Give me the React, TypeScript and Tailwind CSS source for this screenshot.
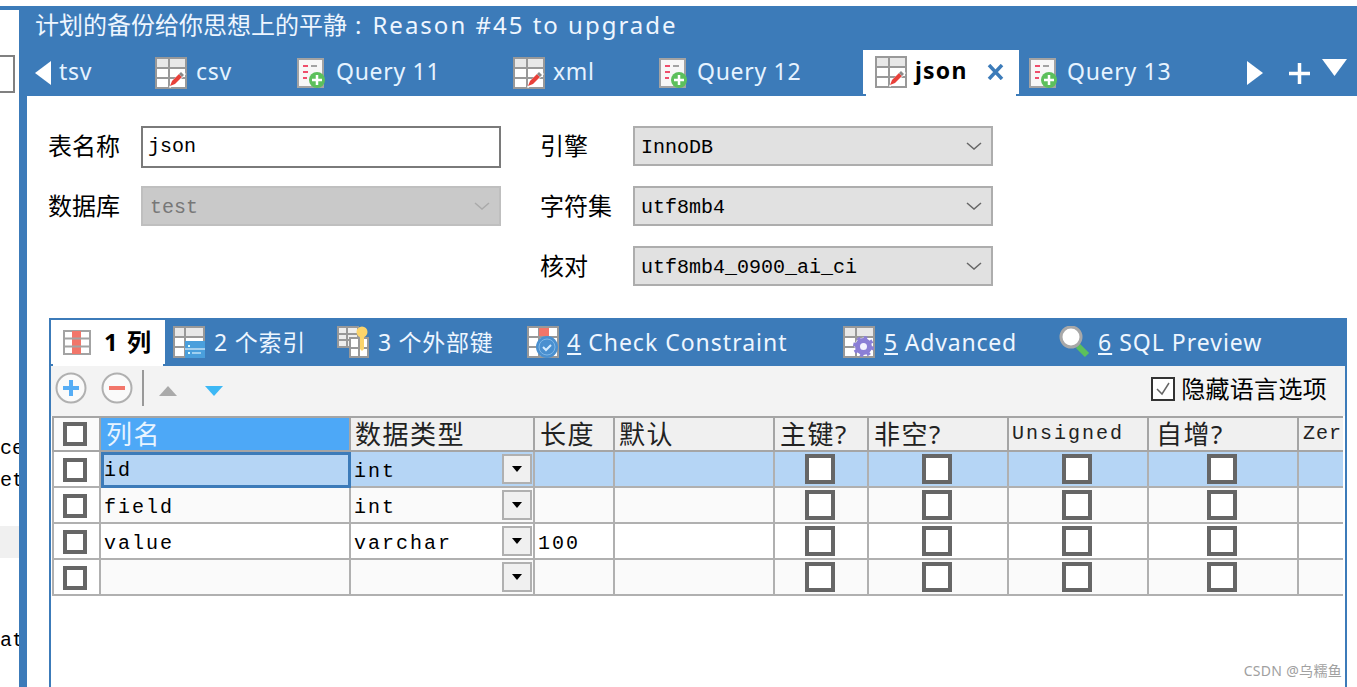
const sans = "font-['Noto_Sans','Noto_Sans_CJK_SC',sans-serif]";
const mono = "font-['Liberation_Mono','Noto_Sans_CJK_SC',monospace]";

function TableEditIcon() {
  return (
    <svg width="32" height="32" viewBox="0 0 32 32" className="shrink-0">
      <rect x="1" y="1" width="30" height="30" fill="#fff" stroke="#999" strokeWidth="2" />
      <rect x="2" y="2" width="28" height="8" fill="#e8e8e8" />
      <path d="M1 11h30M1 21h30M14 1v30" stroke="#999" strokeWidth="2" fill="none" />
      <path d="M14 30l4-7 9-9 4 3-9 9-7 5z" fill="#fff" />
      <path d="M15 29l2-5 7-7 3 3-7 7z" fill="#e8413a" />
      <path d="M24 17l2-2 3 3-2 2z" fill="#8a8a8a" />
    </svg>
  );
}

function QueryIcon() {
  return (
    <svg width="28" height="30" viewBox="0 0 28 30" className="shrink-0">
      <rect x="1" y="1" width="25" height="28" fill="#f7f7f7" stroke="#a3a3a3" strokeWidth="2" />
      <path d="M6 8h5M6 14h5M6 20h4" stroke="#ef4f6c" strokeWidth="2" />
      <path d="M14 8h6" stroke="#a3a3a3" strokeWidth="2" />
      <circle cx="20" cy="22" r="8" fill="#5cc05c" />
      <path d="M20 17v10M15 22h10" stroke="#fff" strokeWidth="2.5" />
    </svg>
  );
}

function ColumnsIcon() {
  return (
    <svg width="28" height="25" viewBox="0 0 28 25" className="shrink-0">
      <rect x="1" y="1" width="26" height="23" fill="#fff" stroke="#a3a3a3" strokeWidth="2" />
      <rect x="9" y="1" width="9" height="23" fill="#f2766a" />
      <path d="M1 8.5h26M1 16.5h26" stroke="#a3a3a3" strokeWidth="2" />
    </svg>
  );
}

function IndexIcon() {
  return (
    <svg width="32" height="32" viewBox="0 0 32 32" className="shrink-0">
      <rect x="1" y="1" width="30" height="30" fill="#fff" stroke="#999" strokeWidth="2" />
      <rect x="2" y="2" width="28" height="8" fill="#e8e8e8" />
      <path d="M1 11h30M1 21h30M12 1v30" stroke="#999" strokeWidth="2" fill="none" />
      <rect x="12" y="15" width="20" height="17" fill="#4a9fdc" />
      <path d="M15 20h2M15 27h2" stroke="#dff" strokeWidth="2" />
      <path d="M19 27h9" stroke="#9fd0f0" strokeWidth="2" />
      <path d="M12 23h20" stroke="#fff" strokeWidth="1" />
    </svg>
  );
}

function ForeignKeyIcon() {
  return (
    <svg width="32" height="32" viewBox="0 0 32 32" className="shrink-0">
      <rect x="1" y="1" width="20" height="20" fill="#eee" stroke="#999" strokeWidth="2" />
      <path d="M1 8h20M1 14h20M10 1v20" stroke="#999" strokeWidth="2" />
      <rect x="13" y="12" width="18" height="19" fill="#fff" stroke="#999" strokeWidth="2" />
      <path d="M13 22h18M22 12v19" stroke="#999" strokeWidth="2" />
      <circle cx="25" cy="6" r="5.5" fill="#fbd46a" />
      <path d="M23 9h4v14l-2 2-2-2z" fill="#fbd46a" />
    </svg>
  );
}

function CheckIcon() {
  return (
    <svg width="33" height="32" viewBox="0 0 33 32" className="shrink-0">
      <rect x="1" y="1" width="30" height="30" fill="#fff" stroke="#999" strokeWidth="2" />
      <path d="M1 11h30M1 21h30M12 1v30" stroke="#999" strokeWidth="2" />
      <rect x="12" y="2" width="10" height="8" fill="#f2766a" />
      <circle cx="20" cy="21" r="11" fill="#4a90d0" />
      <circle cx="20" cy="21" r="8" fill="none" stroke="#7fb6e6" strokeWidth="1" />
      <path d="M16 21l3 3 5-5" stroke="#d5ecff" strokeWidth="2" fill="none" />
    </svg>
  );
}

function AdvancedIcon() {
  return (
    <svg width="32" height="32" viewBox="0 0 32 32" className="shrink-0">
      <rect x="1" y="1" width="30" height="30" fill="#fff" stroke="#999" strokeWidth="2" />
      <rect x="2" y="2" width="28" height="8" fill="#e8e8e8" />
      <path d="M1 11h30M1 21h30M13 1v30" stroke="#999" strokeWidth="2" />
      <circle cx="20.5" cy="20.5" r="9" fill="#fff" />
      <circle cx="20.5" cy="20.5" r="6" fill="#f4f2ff" stroke="#8b7fd6" strokeWidth="5" />
      <circle cx="20.5" cy="20.5" r="9" fill="none" stroke="#8b7fd6" strokeWidth="3" strokeDasharray="3.5 3.57" />
    </svg>
  );
}

function SearchIcon() {
  return (
    <svg width="32" height="32" viewBox="0 0 32 32" className="shrink-0">
      <path d="M19 20l9 9" stroke="#5cc05c" strokeWidth="6" />
      <circle cx="12" cy="11" r="10" fill="#fff" stroke="#a8a8a8" strokeWidth="3" />
    </svg>
  );
}

function TabText({ children, className }: { children: React.ReactNode; className?: string }) {
  return <span className={`${sans} text-[23px] leading-none whitespace-nowrap ${className ?? ""}`}>{children}</span>;
}

function Chevron({ color = "#666" }: { color?: string }) {
  return (
    <svg width="16" height="8" viewBox="0 0 16 8" className="shrink-0">
      <path d="M1 1l7 6 7-6" fill="none" stroke={color} strokeWidth="1.5" />
    </svg>
  );
}

function Field({ value, disabled }: { value: string; disabled?: boolean }) {
  return (
    <div
      className={`flex h-10 w-[360px] items-center justify-between border-2 pr-[9px] text-[20px] ${mono} ${
        disabled ? "border-[#bfbfbf] bg-[#c9c9c9] pl-[7px] text-[#777]" : "border-[#adadad] bg-[#e1e1e1] pl-[6px] text-black"
      }`}
    >
      <span className="mt-[3px]">{value}</span>
      <Chevron color={disabled ? "#aaa" : "#666"} />
    </div>
  );
}

function Label({ children }: { children: React.ReactNode }) {
  return <div className={`${sans} w-[93px] text-[24px] leading-10 text-black`}>{children}</div>;
}

function Box({ small }: { small?: boolean }) {
  return <div className={small ? "h-6 w-6 border-4 border-[#666] bg-white" : "h-[30px] w-[30px] border-4 border-[#666] bg-white"} />;
}

function DropButton() {
  return (
    <div className="ml-auto mr-[1px] flex h-[30px] w-[30px] shrink-0 items-center justify-center border-2 border-[#b0b0b0] bg-[#f0f0f0]">
      <svg width="10" height="6" viewBox="0 0 10 6">
        <path d="M0 0h10L5 6z" fill="#000" />
      </svg>
    </div>
  );
}

const cols = "grid w-[1291px] grid-cols-[49px_250px_184px_80px_160px_94px_140px_140px_150px_44px]";
const headCell = "flex h-full items-center border-r-2 border-[#a5a5a5] whitespace-nowrap leading-none";
const headCjk = `${sans} text-[26px] tracking-[1.5px] text-[#222]`;
const headMono = `${mono} text-[20px] tracking-[2px] text-[#222]`;
const cell = "flex h-[34px] items-center overflow-hidden border-r-2 border-[#b0b0b0]";
const monoText = `${mono} text-[20px] tracking-[2px] text-black`;
const tabY = "-mt-[3px] tracking-[0.7px]";

const rows = [
  { name: "id", type: "int", len: "", bg: "bg-[#b5d5f5]", selected: true },
  { name: "field", type: "int", len: "", bg: "bg-[#fafafa]" },
  { name: "value", type: "varchar", len: "100", bg: "bg-white" },
  { name: "", type: "", len: "", bg: "bg-[#fafafa]" },
];

function App() {
  return (
    <div className="relative flex h-[687px] w-[1357px] overflow-hidden bg-white pt-[6px]">
      {/* left tree, mostly cut off */}
      <div className="flex w-[19px] shrink-0 flex-col border-t-4 border-[#3c7bb9]">
        <div className="mt-[45px] h-[38px] w-[15px] border-y-2 border-r-2 border-[#808080]" />
        <div className={`${mono} mt-[340px] h-[32px] text-right text-[20px] leading-8 text-black`}>ce</div>
        <div className={`${mono} h-[32px] text-right text-[20px] leading-8 text-black`}>et</div>
        <div className="mt-[29px] h-8 bg-[#f0f0f0]" />
        <div className={`${mono} mt-[67px] h-8 text-right text-[20px] leading-8 text-black`}>at</div>
      </div>

      <div className="flex min-w-0 flex-1 flex-col bg-[#3c7bb9]">
        {/* title */}
        <div className={`${sans} flex h-11 shrink-0 items-center pb-[6px] pl-[16px] text-[24px] leading-none whitespace-nowrap text-[#eef6ff]`}>
          <span>计划的备份给你思想上的平静</span>
          <span className="mr-[11px] ml-[8px]">:</span>
          <span className="tracking-[2px]">Reason #45 to upgrade</span>
        </div>

        {/* query tabs */}
        <div className="flex h-[46px] shrink-0 items-center pl-[16px] text-[#e6f3ff]">
          <svg width="16" height="24" viewBox="0 0 16 24" className="mr-[8px] shrink-0">
            <path d="M16 0v24L0 12z" fill="#fff" />
          </svg>
          <div className="w-[96px] shrink-0"><TabText className="tracking-[0.7px]">tsv</TabText></div>
          <div className="flex w-[142px] shrink-0 items-center gap-[9px]"><TableEditIcon /><TabText className={tabY}>csv</TabText></div>
          <div className="flex w-[216px] shrink-0 items-center gap-[11px]"><QueryIcon /><TabText className={tabY}>Query 11</TabText></div>
          <div className="flex w-[146px] shrink-0 items-center gap-[8px]"><TableEditIcon /><TabText className={tabY}>xml</TabText></div>
          <div className="flex w-[204px] shrink-0 items-center gap-[10px]"><QueryIcon /><TabText className={tabY}>Query 12</TabText></div>
          <div className="flex h-full w-[156px] shrink-0 flex-col">
            <div className="flex h-[44px] items-center bg-white pl-3">
              <TableEditIcon />
              <TabText className="ml-2 w-[56px] -mt-[3px] font-bold tracking-[1.2px] text-black">json</TabText>
              <svg width="17" height="16" viewBox="0 0 17 16" className="ml-4 shrink-0">
                <path d="M2 1l13 14M15 1L2 15" stroke="#3c7bb9" strokeWidth="3.5" />
              </svg>
            </div>
            <div className="mx-[3px] h-[2px] bg-white" />
          </div>
          <div className="ml-[10px] flex w-[218px] shrink-0 items-center gap-[10px]"><QueryIcon /><TabText className={tabY}>Query 13</TabText></div>
          <svg width="16" height="24" viewBox="0 0 16 24" className="mr-[26px] shrink-0">
            <path d="M0 0v24l16-12z" fill="#fff" />
          </svg>
          <svg width="21" height="21" viewBox="0 0 21 21" className="mr-[12px] shrink-0">
            <path d="M10.5 0v21M0 10.5h21" stroke="#fff" strokeWidth="3.5" />
          </svg>
          <svg width="25" height="17" viewBox="0 0 25 17" className="mb-[12px] shrink-0">
            <path d="M0 0h25L12.5 17z" fill="#fff" />
          </svg>
        </div>

        {/* editor */}
        <div className="ml-2 flex min-h-0 flex-1 flex-col bg-white">
          <div className="flex pt-[30px] pl-[21px]">
            <div className="flex w-[492px] shrink-0 flex-col gap-5">
              <div className="flex">
                <Label>表名称</Label>
                <div className={`${mono} flex h-[42px] w-[360px] items-center border-2 border-[#7a7a7a] bg-white pl-[5px] text-[20px] text-black`}>json</div>
              </div>
              <div className="-mt-[2px] flex">
                <Label>数据库</Label>
                <Field value="test" disabled />
              </div>
            </div>
            <div className="flex flex-col gap-5">
              <div className="flex"><Label>引擎</Label><Field value="InnoDB" /></div>
              <div className="flex"><Label>字符集</Label><Field value="utf8mb4" /></div>
              <div className="flex"><Label>核对</Label><Field value="utf8mb4_0900_ai_ci" /></div>
            </div>
          </div>

          {/* columns panel */}
          <div className="mt-8 ml-[22px] flex min-h-0 w-[1298px] flex-1 flex-col border-x-2 border-[#3c7bb9]">
            <div className="flex h-12 shrink-0 items-end bg-[#3c7bb9] text-[#eef6ff]">
              <div className="flex h-[46px] w-[114px] shrink-0 flex-col">
                <div className="flex h-11 items-center bg-white pl-3">
                  <ColumnsIcon />
                  <span className={`${sans} ml-[13px] text-[24px] leading-none font-bold tracking-[1.5px] text-black`}>1 列</span>
                </div>
                <div className="mx-[2px] h-[2px] bg-white" />
              </div>
              <div className="flex h-full w-[172px] shrink-0 items-center gap-[9px] pl-2"><IndexIcon /><TabText className="tracking-[0.8px]">2 个索引</TabText></div>
              <div className="flex h-full w-[190px] shrink-0 items-center gap-[9px]"><ForeignKeyIcon /><TabText className="tracking-[0.7px]">3 个外部键</TabText></div>
              <div className="flex h-full w-[316px] shrink-0 items-center gap-[7px]"><CheckIcon /><TabText className="tracking-[1px]"><u>4</u> Check Constraint</TabText></div>
              <div className="flex h-full w-[216px] shrink-0 items-center gap-[9px]"><AdvancedIcon /><TabText className="tracking-[0.8px]"><u>5</u> Advanced</TabText></div>
              <div className="flex h-full items-center gap-[7px]"><SearchIcon /><TabText className="tracking-[1px]"><u>6</u> SQL Preview</TabText></div>
            </div>

            {/* toolbar */}
            <div className="flex h-[50px] shrink-0 items-center bg-[#f3f3f3] pb-[6px] pl-1">
              <svg width="32" height="32" viewBox="0 0 32 32" className="shrink-0">
                <circle cx="16" cy="16" r="14.5" fill="#fafafa" stroke="#b0b0b0" strokeWidth="2" />
                <path d="M16 8v16M8 16h16" stroke="#56adf5" strokeWidth="4" />
              </svg>
              <svg width="32" height="32" viewBox="0 0 32 32" className="ml-[14px] shrink-0">
                <circle cx="16" cy="16" r="14.5" fill="#fafafa" stroke="#b0b0b0" strokeWidth="2" />
                <path d="M8 16h16" stroke="#f2766a" strokeWidth="4" />
              </svg>
              <div className="ml-[9px] h-9 w-[2px] bg-[#999]" />
              <svg width="18" height="10" viewBox="0 0 18 10" className="mt-[5px] ml-[15px] shrink-0">
                <path d="M9 0l9 10H0z" fill="#aaa" />
              </svg>
              <svg width="18" height="10" viewBox="0 0 18 10" className="mt-[5px] ml-[28px] shrink-0">
                <path d="M0 0h18l-9 10z" fill="#3db8f5" />
              </svg>
              <div className="mt-[2px] mr-[18px] ml-auto flex items-center gap-[6px]">
                <div className="flex h-6 w-6 items-center justify-center border-2 border-[#333] bg-white">
                  <svg width="16" height="14" viewBox="0 0 16 14">
                    <path d="M2 7l5 5 7-11" fill="none" stroke="#666" strokeWidth="1.5" />
                  </svg>
                </div>
                <span className={`${sans} text-[24px] leading-none tracking-[0.3px] whitespace-nowrap text-black`}>隐藏语言选项</span>
              </div>
            </div>

            {/* grid */}
            <div className="ml-[1px] w-[1291px] overflow-hidden">
              <div className={`${cols} h-9 border-y-2 border-[#a5a5a5] bg-[#f0f0f0]`}>
                <div className={`${headCell} border-l-2 bg-[#fafafa] pl-[9px]`}><Box small /></div>
                <div className={`${headCell} bg-[#4da8f7] pl-[5px] ${sans} text-[26px] tracking-[1.5px] text-[#e8f4ff]`}>列名</div>
                <div className={`${headCell} pl-[4px] ${headCjk}`}>数据类型</div>
                <div className={`${headCell} pl-[5px] ${headCjk}`}>长度</div>
                <div className={`${headCell} pl-[4px] ${headCjk}`}>默认</div>
                <div className={`${headCell} pl-[5px] ${headCjk}`}>主键?</div>
                <div className={`${headCell} pl-[5px] ${headCjk}`}>非空?</div>
                <div className={`${headCell} pl-[3px] ${headMono}`}>Unsigned</div>
                <div className={`${headCell} pl-[7px] ${headCjk}`}>自增?</div>
                <div className={`flex h-full items-center pl-[4px] whitespace-nowrap ${mono} text-[20px] leading-none tracking-[1px] text-[#222]`}>Zer</div>
              </div>
              {rows.map((r, i) => (
                <div key={i} className={`${cols} border-b-2 border-[#b0b0b0] ${r.bg}`}>
                  <div className={`${cell} border-l-2 bg-white pt-[2px] pl-[9px]`}><Box small /></div>
                  {r.selected ? (
                    <div className={`${monoText} -mb-[2px] flex h-9 items-center border-[3px] border-[#3c7bb9]`}>
                      <span className="mt-[2px]">{r.name}</span>
                    </div>
                  ) : (
                    <div className={`${cell} ${monoText} pl-[3px]`}><span className="mt-[6px]">{r.name}</span></div>
                  )}
                  <div className={`${cell} ${monoText} pl-[3px]`}>
                    <span className="mt-[6px]">{r.type}</span>
                    <DropButton />
                  </div>
                  <div className={`${cell} ${monoText} pl-[3px]`}><span className="mt-[6px]">{r.len}</span></div>
                  <div className={cell} />
                  <div className={`${cell} justify-center pr-[2px]`}><Box /></div>
                  <div className={`${cell} justify-center pr-[2px]`}><Box /></div>
                  <div className={`${cell} justify-center pr-[2px]`}><Box /></div>
                  <div className={`${cell} justify-center pr-[2px]`}><Box /></div>
                  <div className="h-[34px]" />
                </div>
              ))}
            </div>
          </div>
        </div>
      </div>

      <div className={`${sans} absolute right-[15px] bottom-[8px] text-[14px] leading-4 tracking-[0.3px] whitespace-nowrap text-[#a0a0a0]`}>CSDN @乌糯鱼</div>
    </div>
  );
}

export default App;
